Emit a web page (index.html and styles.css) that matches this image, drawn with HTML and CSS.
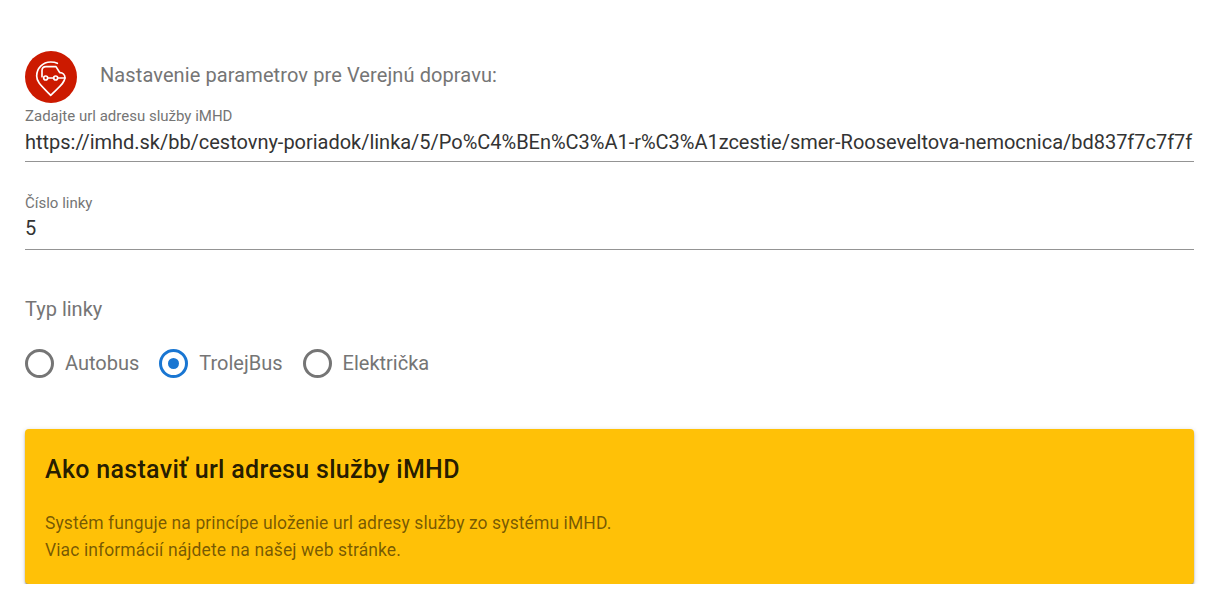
FILE: index.html
```html
<!DOCTYPE html>
<html lang="sk">
<head>
  <meta charset="UTF-8" />
  <meta name="viewport" content="width=device-width, initial-scale=1.0" />
  <title>Nastavenie parametrov</title>
  <link rel="stylesheet" href="styles.css">
</head>
<body>
  <main class="page">
    <!-- Heading -->
    <div class="title-row">
      <span class="avatar">
        <svg viewBox="0 0 126 126" width="42" height="42" fill="none" stroke="#fff" stroke-width="5" stroke-linecap="round" stroke-linejoin="round">
          <path d="M82 22C76 19 69 18 62 18C38 18 20 37 20 60C20 78 32 88 62 118C88 92 103 82 105 66"/>
          <path d="M36 62V44C36 36 40 32 48 32H78L88 48"/>
          <circle cx="47" cy="66" r="6"/>
          <circle cx="77" cy="66" r="6"/>
          <path d="M53 66H71M83 66H105C105 56 98 50 90 50"/>
        </svg>
      </span>
      <h2 class="title">Nastavenie parametrov pre Verejnú dopravu:</h2>
    </div>

    <!-- Inputs -->
    <div class="field field-url">
      <label for="url">Zadajte url adresu služby iMHD</label>
      <input id="url" type="text" value="https://imhd.sk/bb/cestovny-poriadok/linka/5/Po%C4%BEn%C3%A1-r%C3%A1zcestie/smer-Rooseveltova-nemocnica/bd837f7c7f7f" />
    </div>
    <div class="field field-line">
      <label for="line">Číslo linky</label>
      <input id="line" type="text" value="5" />
    </div>

    <!-- Line type -->
    <div class="group-label">Typ linky</div>
    <div class="radios">
      <label class="radio"><input type="radio" name="typ" /><span class="dot"></span>Autobus</label>
      <label class="radio"><input type="radio" name="typ" checked /><span class="dot"></span>TrolejBus</label>
      <label class="radio"><input type="radio" name="typ" /><span class="dot"></span>Električka</label>
    </div>

    <!-- Help card -->
    <section class="card">
      <h3>Ako nastaviť url adresu služby iMHD</h3>
      <p>Systém funguje na princípe uloženie url adresy služby zo systému iMHD.<br>Viac informácií nájdete na našej web stránke.</p>
    </section>
  </main>
</body>
</html>
```

FILE: styles.css
```css
* { box-sizing: border-box; margin: 0; padding: 0; }
body { font-family: Roboto, "Liberation Sans", sans-serif; background: #fff; color: rgba(0,0,0,0.87); }

.page { padding: 51px 21px 0 25px; }

/* Heading */
.title-row { display: flex; align-items: flex-start; gap: 23px; height: 49px; }
.avatar { width: 52px; height: 52px; border-radius: 50%; background: #cc1a00; display: flex; align-items: center; justify-content: center; flex-shrink: 0; }
.title { margin-top: 12px; font-size: 20px; line-height: 24px; font-weight: 400; letter-spacing: 0.1px; color: #757575; }

/* Text fields */
.field { display: flex; flex-direction: column; border-bottom: 1px solid #949494; }
.field label { font-size: 15px; line-height: 17px; color: #757575; }
.field input { border: none; outline: none; background: none; font: inherit; font-size: 20px; line-height: 24px; height: 33px; letter-spacing: -0.02px; color: #333; width: 100%; }
.field-url { margin-top: 8px; height: 54px; }
.field-line { margin-top: 33px; height: 55px; }
.field-line input { height: 31px; }

/* Radios */
.group-label { margin-top: 45px; font-size: 20px; line-height: 28px; color: #757575; }
.radios { display: flex; gap: 20px; margin-top: 25px; }
.radio { display: flex; align-items: center; gap: 11px; font-size: 20px; color: #757575; height: 30px; }
.radio input { display: none; }
.dot { width: 29px; height: 29px; border: 3px solid #757575; border-radius: 50%; display: flex; align-items: center; justify-content: center; }
.radio input:checked + .dot { border-color: #1976d2; }
.radio input:checked + .dot::after { content: ""; width: 11px; height: 11px; border-radius: 50%; background: #1976d2; }

/* Help card */
.card { margin-top: 51px; height: 155px; background: #ffc107; border-radius: 4px; padding: 26px 20px 0; box-shadow: 0 3px 2px -1px rgba(0,0,0,0.3), 0 2px 2px rgba(0,0,0,0.2), 0 1px 5px rgba(0,0,0,0.16); }
.card h3 { font-size: 25px; font-weight: 500; line-height: 30px; letter-spacing: 0.31px; }
.card p { margin-top: 25px; font-size: 17.5px; line-height: 27px; letter-spacing: 0.1px; color: rgba(0,0,0,0.55); }
```
